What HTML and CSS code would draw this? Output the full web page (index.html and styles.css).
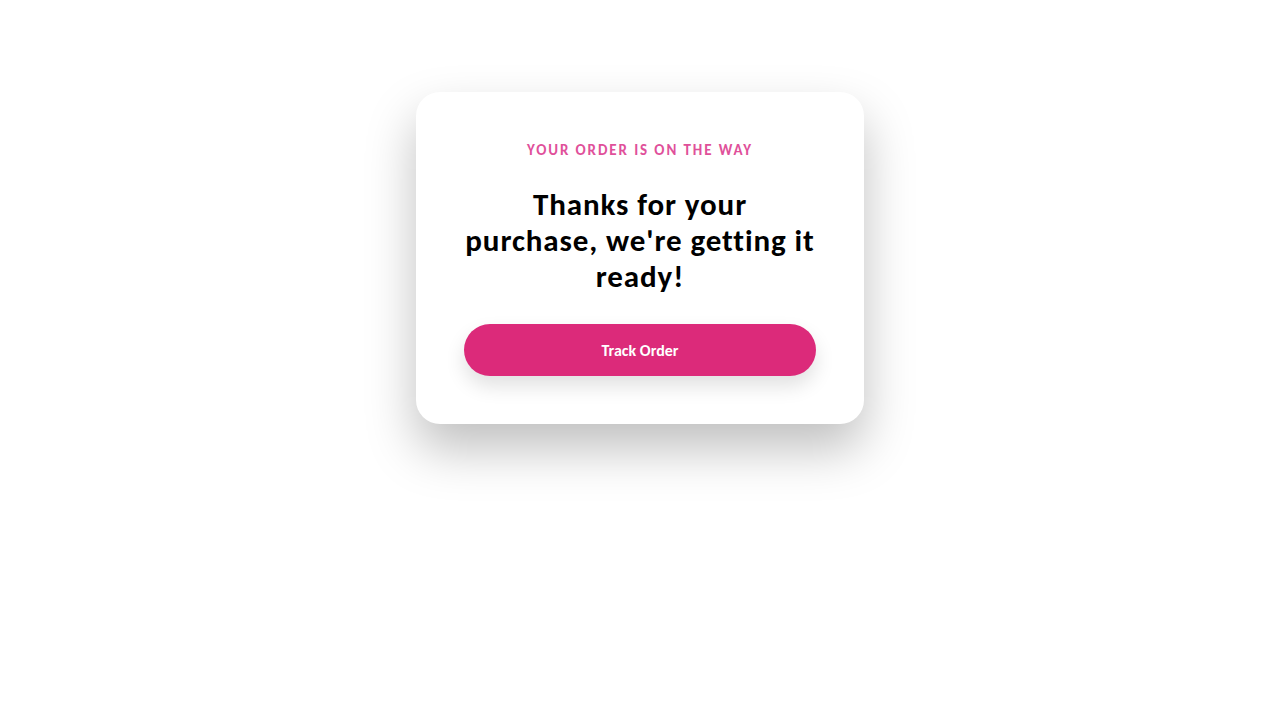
FILE: index.html
```html
<!DOCTYPE html>
<html lang="en">
<head>
  <meta charset="UTF-8">
  <title>Order Confirmed</title>
  <link rel="stylesheet" href="styles.css">
</head>
<body>

  <!-- 订单卡片 -->
  <div class="order-card">
    <p class="eyebrow">Your order is on the way</p>
    <h1 class="title">Thanks for your<br>purchase, we're getting it ready!</h1>
    <button class="btn">Track Order</button>
  </div>

</body>
</html>
```

FILE: styles.css
```css
body {
  font-family: Carlito, Calibri, Lato, sans-serif;
  background: #fff;
  margin: 0;
  padding: 92px 0 0;
  min-height: 100vh;
  box-sizing: border-box;
  display: flex;
  justify-content: center;
  align-items: flex-start;
}

/* 卡片 */
.order-card {
  width: 448px;
  box-sizing: border-box;
  padding: 48px;
  background: #fff;
  border-radius: 24px;
  box-shadow: 0 25px 50px rgba(0, 0, 0, 0.25);
  text-align: center;
}

.eyebrow {
  margin: 0;
  font-size: 15px;
  line-height: 20px;
  font-weight: bold;
  letter-spacing: 1.9px;
  text-transform: uppercase;
  color: #e0509a;
}

.title {
  margin: 26px 0 30px;
  font-size: 31px;
  line-height: 36px;
  font-weight: bold;
  letter-spacing: 0.9px;
  color: #000;
}

/* 按钮 */
.btn {
  display: block;
  width: 100%;
  height: 52px;
  border: none;
  border-radius: 26px;
  background: #dc2a7a;
  color: #fff;
  font-family: inherit;
  font-size: 16px;
  font-weight: bold;
  cursor: pointer;
  box-shadow: 0 10px 20px rgba(0, 0, 0, 0.12);
}
```
